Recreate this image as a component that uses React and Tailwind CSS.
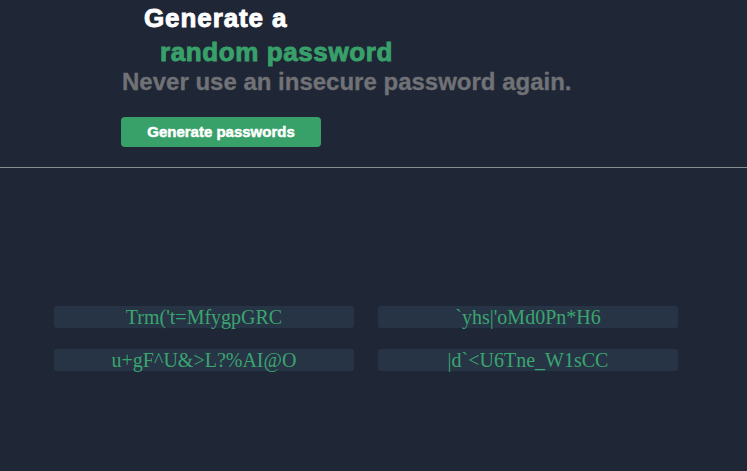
const passwords = ["Trm('t=MfygpGRC", "`yhs|'oMd0Pn*H6", 'u+gF^U&>L?%AI@O', '|d`<U6Tne_W1sCC'];

const App = () => {
    return (
        <div className="min-h-[471px] w-full bg-[#1f2737] font-['Liberation_Sans',Arial,sans-serif]">
            <header className="pt-[2px] pl-[122px]">
                <h1 className="text-[26px] font-bold leading-[32px] [-webkit-text-stroke:0.9px_currentColor]">
                    <span className="block ml-[22px] tracking-[0.9px] text-white">Generate a</span>
                    <span className="block ml-[38px] mt-[2px] tracking-[0.6px] text-[#38a169]">random password</span>
                </h1>
                <p className="text-[24px] font-bold leading-[28px] text-[#717276] [-webkit-text-stroke:0.3px_currentColor]">Never use an insecure password again.</p>
                <button className="mt-[21px] -ml-px h-[30px] w-[200px] rounded bg-[#38a169] text-[15px] font-bold text-white [-webkit-text-stroke:0.5px_currentColor]">
                    Generate passwords
                </button>
            </header>
            <hr className="mt-5 border-0 border-t border-[#8a8d93]" />
            <div className="mt-[138px] ml-[54px] grid w-[624px] grid-cols-2 gap-x-[24px] gap-y-[21px]">
                {passwords.map((pw) => (
                    <div key={pw} className="h-[22px] rounded-[3px] bg-[#273446] text-center font-['Liberation_Serif','Times_New_Roman',serif] text-[20px] leading-[22px] text-[#3aa56e]">
                        {pw}
                    </div>
                ))}
            </div>
        </div>
    );
};

export default App;
